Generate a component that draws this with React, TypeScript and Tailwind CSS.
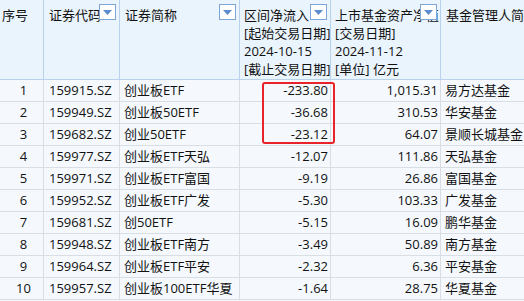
const rows = [
  ["1", "159915.SZ", "创业板ETF", "-233.80", "1,015.31", "易方达基金"],
  ["2", "159949.SZ", "创业板50ETF", "-36.68", "310.53", "华安基金"],
  ["3", "159682.SZ", "创业50ETF", "-23.12", "64.07", "景顺长城基金"],
  ["4", "159977.SZ", "创业板ETF天弘", "-12.07", "111.86", "天弘基金"],
  ["5", "159971.SZ", "创业板ETF富国", "-9.19", "26.86", "富国基金"],
  ["6", "159952.SZ", "创业板ETF广发", "-5.30", "103.33", "广发基金"],
  ["7", "159681.SZ", "创50ETF", "-5.15", "16.09", "鹏华基金"],
  ["8", "159948.SZ", "创业板ETF南方", "-3.49", "50.89", "南方基金"],
  ["9", "159964.SZ", "创业板ETF平安", "-2.32", "6.36", "平安基金"],
  ["10", "159957.SZ", "创业板100ETF华夏", "-1.64", "28.75", "华夏基金"],
]

function FilterButton() {
  return (
    <div className="absolute right-[3px] top-[4px] w-[17px] h-[16px] bg-white border border-[#7da6d8] flex items-center justify-center">
      <svg width="9" height="5" viewBox="0 0 9 5">
        <path d="M0 0 H9 L4.5 5 Z" fill="#5a8ccc" />
      </svg>
    </div>
  )
}

export default function App() {
  const cols = "grid grid-cols-[44px_76px_120px_91px_110px_83px]"
  return (
    <div
      className="w-[524px] h-[301px] overflow-hidden bg-[#f5f9fd] text-[13px] text-[#111] relative"
      style={{ fontFamily: '"Open Sans", "Noto Sans CJK SC", sans-serif' }}
    >
      {/* Header */}
      <div className={`${cols} h-[80px] bg-[#eaf4fd] border-b border-[#b8d2ec]`}>
        <div className="border-r border-[#b8d2ec] pl-[2px] pt-[6px] leading-[18px] whitespace-nowrap overflow-hidden">序号</div>
        <div className="relative border-r border-[#b8d2ec] pl-[5px] pt-[6px] leading-[18px] whitespace-nowrap overflow-hidden">
          证券代码
          <FilterButton />
        </div>
        <div className="relative border-r border-[#b8d2ec] pl-[5px] pt-[6px] leading-[18px] whitespace-nowrap overflow-hidden">
          证券简称
          <FilterButton />
        </div>
        <div className="relative border-r border-[#b8d2ec] pl-[4px] pt-[6px] leading-[18px] whitespace-nowrap overflow-hidden">
          <div>区间净流入</div>
          <div>[起始交易日期]</div>
          <div>2024-10-15</div>
          <div>[截止交易日期]</div>
          <FilterButton />
        </div>
        <div className="relative border-r border-[#b8d2ec] pl-[4px] pt-[6px] leading-[18px] whitespace-nowrap overflow-hidden">
          <div>上市基金资产净值</div>
          <div>[交易日期]</div>
          <div>2024-11-12</div>
          <div>[单位] 亿元</div>
          <div className="absolute right-[3px] top-[4px] w-[17px] h-[16px] bg-white border border-[#7da6d8] flex items-center justify-center">
            <svg width="9" height="5" viewBox="0 0 9 5">
              <path d="M0 0 H9 L4.5 5 Z" fill="#5a8ccc" />
            </svg>
          </div>
        </div>
        <div className="pl-[5px] pt-[6px] leading-[18px] whitespace-nowrap overflow-hidden">基金管理人简称</div>
      </div>

      {/* Rows */}
      {rows.map((r) => (
        <div key={r[0]} className={`${cols} h-[22px] border-b border-[#d9dee4] leading-[21px]`}>
          <div className="border-r border-[#d9dee4] text-center pl-[4px]">{r[0]}</div>
          <div className="border-r border-[#d9dee4] pl-[5px] whitespace-nowrap overflow-hidden">{r[1]}</div>
          <div className="border-r border-[#d9dee4] pl-[4px] whitespace-nowrap overflow-hidden">{r[2]}</div>
          <div className="border-r border-[#d9dee4] text-right pr-[2px] whitespace-nowrap">{r[3]}</div>
          <div className="border-r border-[#d9dee4] text-right pr-[2px] whitespace-nowrap">{r[4]}</div>
          <div className="pl-[4px] whitespace-nowrap">{r[5]}</div>
        </div>
      ))}

      {/* Highlight box */}
      <div className="absolute left-[262px] top-[82px] w-[73px] h-[62px] border-2 border-[#e8232a] rounded-[3px]" />
    </div>
  )
}
